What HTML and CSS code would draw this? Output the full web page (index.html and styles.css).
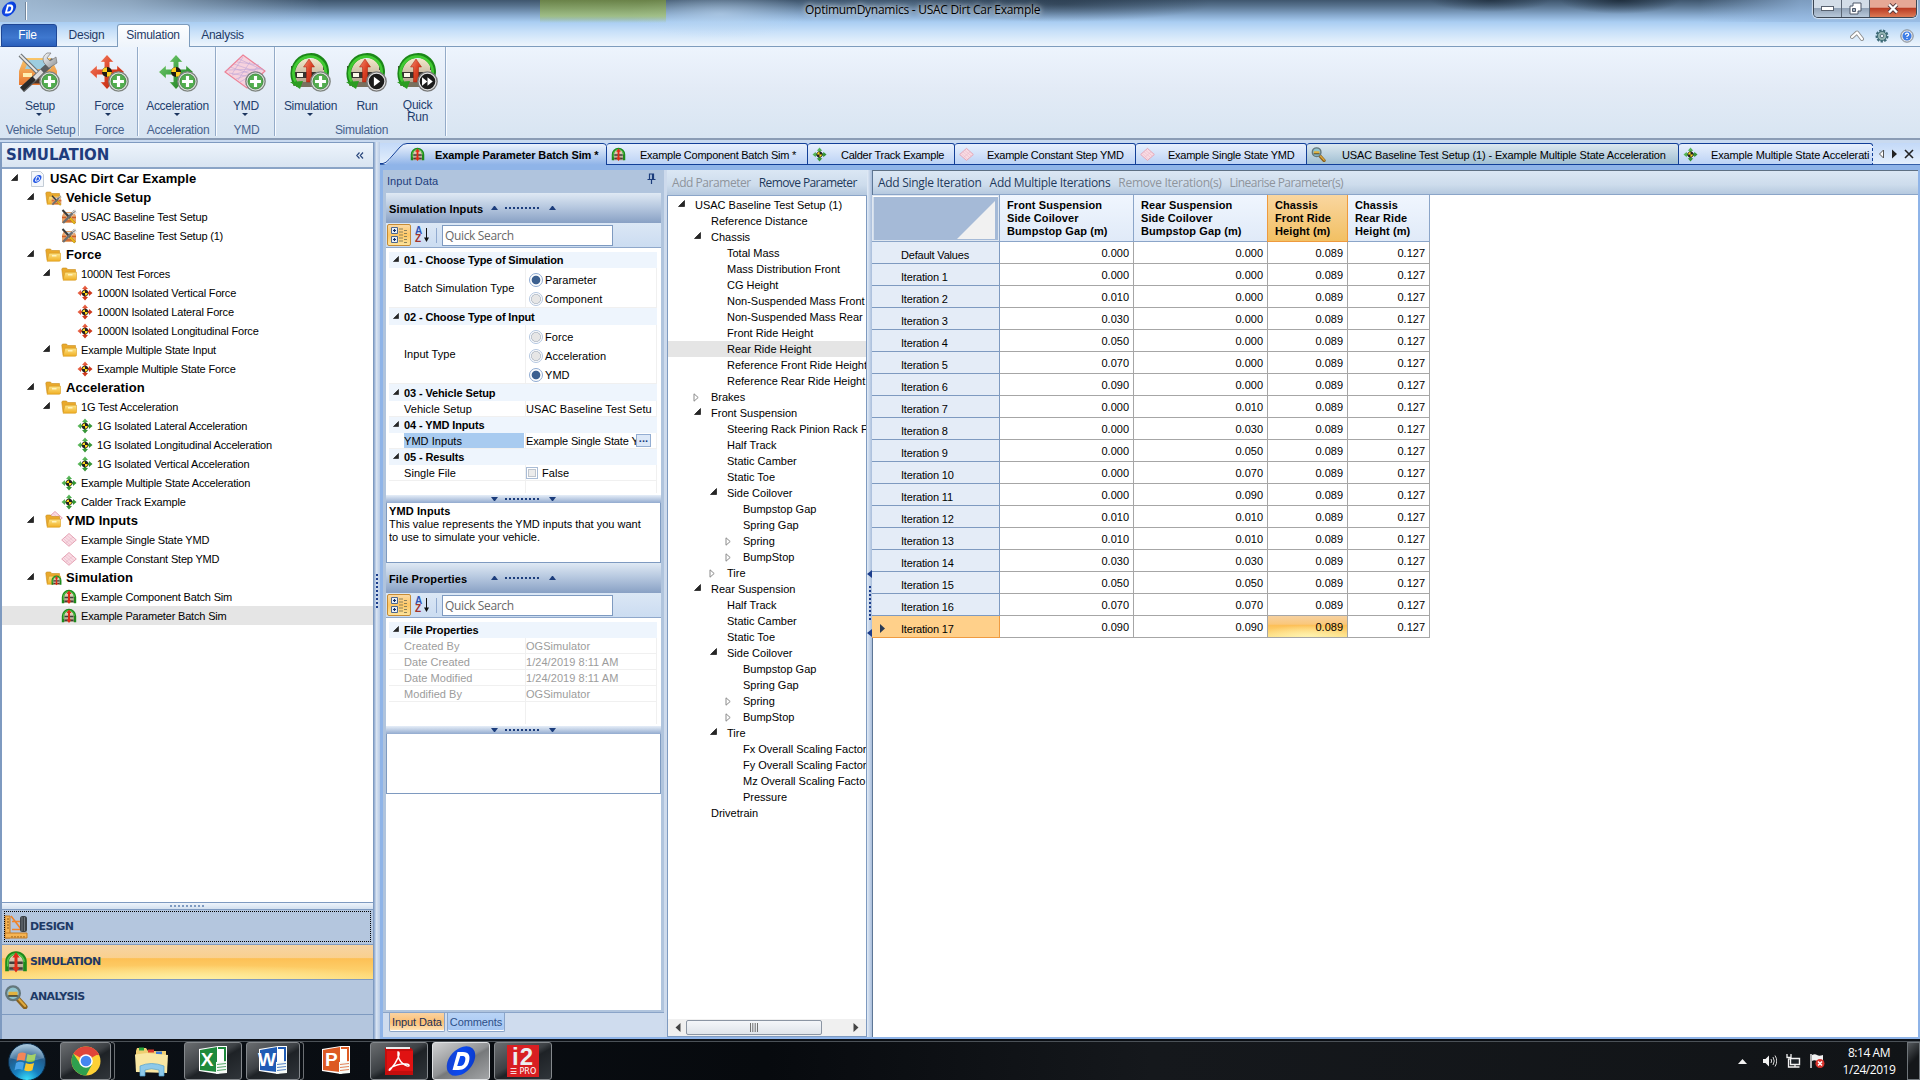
FILE: index.html
```html
<!DOCTYPE html>
<html lang="en">
<head>
<meta charset="utf-8">
<title>OptimumDynamics - USAC Dirt Car Example</title>
<link rel="stylesheet" href="styles.css">
</head>
<body>
<svg class="defs" width="0" height="0">
  <defs>
    <linearGradient id="gRed" x1="0" y1="0" x2="1" y2="1"><stop offset="0" stop-color="#f58a6e"/><stop offset=".5" stop-color="#dc4326"/><stop offset="1" stop-color="#b3260c"/></linearGradient>
    <linearGradient id="gGrn" x1="0" y1="0" x2="1" y2="1"><stop offset="0" stop-color="#7fd07a"/><stop offset=".5" stop-color="#3fa443"/><stop offset="1" stop-color="#23791f"/></linearGradient>
    <linearGradient id="gFold" x1="0" y1="0" x2="0" y2="1"><stop offset="0" stop-color="#fde58a"/><stop offset="1" stop-color="#f0ae22"/></linearGradient>
    <linearGradient id="gCar" x1="0" y1="0" x2="0" y2="1"><stop offset="0" stop-color="#f9c76b"/><stop offset="1" stop-color="#e5702c"/></linearGradient>
    <linearGradient id="gBody" x1="0" y1="0" x2="0" y2="1"><stop offset="0" stop-color="#f3e6cb"/><stop offset="1" stop-color="#a89b86"/></linearGradient>
    <linearGradient id="gSteel" x1="0" y1="0" x2="1" y2="1"><stop offset="0" stop-color="#fafafa"/><stop offset="1" stop-color="#8b8f92"/></linearGradient>
    <radialGradient id="gOrb" cx=".5" cy="1" r="1"><stop offset="0" stop-color="#3ce6ff"/><stop offset=".35" stop-color="#1780c0"/><stop offset=".7" stop-color="#225c8c"/><stop offset="1" stop-color="#9fc4dc"/></radialGradient>
    <linearGradient id="gD" x1="0" y1="0" x2="1" y2="1"><stop offset="0" stop-color="#1b3fc4"/><stop offset=".5" stop-color="#0a49f0"/><stop offset="1" stop-color="#0a35c0"/></linearGradient>
  </defs>
  <symbol id="down" viewBox="0 0 7 7"><path d="M6.500.5v6H.5z" fill="#262626" stroke="#000" stroke-width=".6"/></symbol>
  <symbol id="right" viewBox="0 0 7 9"><path d="M1 .8v7.400l4.200-3.700z" fill="#fff" stroke="#8a8a8a"/></symbol>
  <symbol id="logo" viewBox="0 0 32 32"><ellipse cx="16" cy="16" rx="17" ry="11.5" transform="rotate(-48 16 16)" fill="url(#gD)"/><path d="M12.500 7h5.500c6 0 7.500 4 6 9.500C22.500 22 19 25 13.500 25H7.500zM15.300 11l-3.100 10h2.600c3 0 4.600-2 5.300-5 .8-3.400 0-5-2.900-5z" fill="#fff" fill-rule="evenodd"/></symbol>
  <symbol id="doc" viewBox="0 0 16 16"><path d="M2.500.5h9l3 3v12h-12z" fill="#f4f7fb" stroke="#c3ccd6"/><ellipse cx="8.300" cy="8" rx="5" ry="3" transform="rotate(-42 8.300 8)" fill="#2458e6"/><path d="M7.600 5.800h1.700c2 0 1.600 4.300-1.600 4.300H6.500z" fill="none" stroke="#fff"/></symbol>
  <symbol id="folder" viewBox="0 0 16 16"><path d="M.8 3.200 1.500 2h4l1.200 1.500h7.800V13H2z" fill="#e9a92c" stroke="#c98d1d" stroke-width=".6"/><path d="M4 6.200h11.600v6.500q0 1.500-1.500 1.500H2z" fill="url(#gFold)" stroke="#d79a20" stroke-width=".6"/><path d="M7 8h4.500v1.500H7z" fill="#fff3bd"/></symbol>
  <symbol id="move" viewBox="0 0 16 16"><path d="M8 .5 11 4H9.300v2.700H12V5l3.500 3L12 11V9.300H9.300V12H11l-3 3.500L5 12h1.700V9.300H4V11L.5 8 4 5v1.700h2.700V4H5z"/><circle cx="8" cy="8" r="3.200" fill="#222"/><path d="M8 8V5.400A2.600 2.600 0 0 0 5.400 8zm0 0v2.600A2.600 2.600 0 0 0 10.600 8z" fill="#ffd91e"/></symbol>
  <symbol id="ymd" viewBox="0 0 16 16"><path d="M8 1.500 15.300 8 8 14.300.7 8z" fill="#f9dbe3" stroke="#e4a3b4"/><path d="M4 5l7 6M6 3.500l7 6M3 7l6 6M5 11l7-6" stroke="#e9bccb" stroke-width=".7"/></symbol>
  <symbol id="setup" viewBox="0 0 16 16"><path d="M1 14V7l2-4h10l2 4v7z" fill="#e8a46a"/><path d="M3.500 6.500 5 4h6l1.500 2.500z" fill="#c9d5da"/><path d="M1 8.500h4M11 8.500h4M4 12h8" stroke="#ce5b26" stroke-width="1.500"/><path d="M1.500 1 8 8l6 6.500" stroke="#3a3a3a" stroke-width="2"/><path d="M9 9l5 5.500" stroke="#e7b416" stroke-width="2.400"/><path d="M14 1.500 2 14" stroke="#6f6f6f" stroke-width="2.500"/><path d="M11 3.500 14.500 1M12 5l3.500-1.500" stroke="#d8d8d8" stroke-width="1.300"/></symbol>
  <symbol id="sim" viewBox="0 0 16 16"><path d="M2.500 14V7.500a5.500 5.500 0 0 1 11 0V14z" fill="url(#gBody)"/><path d="M2 14.200V8a6 6 0 0 1 12 0v6.200" fill="none" stroke="#1d8a1b" stroke-width="2.400"/><path d="M2.400 11V8a5.500 5.500 0 0 1 11 0" fill="none" stroke="#59c84e" stroke-width=".9"/><path d="M3.500 8.500h9M3.500 12.300h9" stroke="#40403c" stroke-width="1.600"/><path d="M8 1.500 10.500 5H9v6.500h1.500L8 15l-2.500-3.500H7V5H5.500z" fill="#e02b17"/></symbol>
  <symbol id="mag" viewBox="0 0 16 16"><path d="m9 9 5 5.500" stroke="#8a6320" stroke-width="3.400" stroke-linecap="round"/><path d="m9.500 9 4.600 5" stroke="#e0a93c" stroke-width="1.400" stroke-linecap="round"/><circle cx="6" cy="5.500" r="4.600" fill="#8fc3cd" stroke="#64777c" stroke-width="1.500"/><path d="M3 4.500h6v3H3z" fill="#e1b13e"/><path d="M2.800 7.300h6.400" stroke="#3c3c33"/></symbol>
  <symbol id="badge" viewBox="0 0 20 20"><circle cx="10" cy="10" r="9.200" fill="#e9ece9" stroke="#7d837e" stroke-width="1.300"/><circle cx="10" cy="10" r="7.200" fill="#52ad4e" stroke="#3e7c3e" stroke-width=".8"/><path d="M10 4.800v10.400M4.800 10h10.400" stroke="#fff" stroke-width="3"/></symbol>
  <symbol id="play" viewBox="0 0 20 20"><circle cx="10" cy="10" r="9.200" fill="#e2e2e2" stroke="#777" stroke-width="1.300"/><circle cx="10" cy="10" r="7.400" fill="#1b1b1b"/><path d="M7.500 5.500v9l6-4.500z" fill="#fff"/></symbol>
  <symbol id="ffwd" viewBox="0 0 20 20"><circle cx="10" cy="10" r="9.200" fill="#e2e2e2" stroke="#777" stroke-width="1.300"/><circle cx="10" cy="10" r="7.400" fill="#1b1b1b"/><path d="M4.800 6v8l5-4zM10 6v8l5-4z" fill="#fff"/></symbol>
  <symbol id="bigmove" viewBox="0 0 36 36"><path d="M18 .8 24.500 8h-3.800v7.300H28v-3.800l7.200 6.500-7.200 6.500v-3.800h-7.300V28h3.800L18 35.200 11.500 28h3.800v-7.300H8v3.800L.8 18 8 11.500v3.800h7.300V8h-3.800z" stroke="#fff" stroke-opacity=".6" stroke-width=".6"/><circle cx="18" cy="18" r="5" fill="#1e1a14"/><path d="M18 18v-4.800a4.800 4.800 0 0 0-4.800 4.800zm0 0v4.800a4.800 4.800 0 0 0 4.800-4.800z" fill="#ffce1e"/></symbol>
  <symbol id="bigsim" viewBox="0 0 40 40"><path d="M5 15Q6 8 12 7h16q6 1 7 8l1 19H4z" fill="url(#gBody)"/><path d="M2 14h4v4H2zM34 14h4v4h-4z" fill="#4b4b40"/><path d="M6 20h28v6H6z" fill="#37342f"/><path d="M8 21h6v4H8zM26 21h6v4h-6z" fill="#fbf8e8"/><path d="M7 30h26v5H7z" fill="#79715f"/><path d="M7 33Q1 22 6 13C11 3 25 0 33 8c5 5 6 13 3 20" fill="none" stroke="#1b8718" stroke-width="4.600"/><path d="M6.500 30Q2 20 7 12.500C13 3.500 25 2 32 9c4.500 4.500 5.500 11 3.500 17" fill="none" stroke="#41ca32" stroke-width="2.800"/><path d="m1 30 13-1-3 8z" fill="#2c9d22"/><path d="m20 7 5.500 8h-3v15h-5V15h-3z" fill="url(#gRed)" stroke="#a51f0c" stroke-width=".5"/></symbol>
  <symbol id="bigsetup" viewBox="0 0 40 40"><path d="M1 35V19l5-13h27l6 13v14H1z" fill="url(#gCar)"/><path d="M7 17 11 8h18l4 9z" fill="#9dcde0"/><path d="M5 23h9M26 23h9" stroke="#fff0b0" stroke-width="4"/><path d="M12 29h17" stroke="#4a352a" stroke-width="5"/><path d="M2 3 20 21" stroke="#6e7478" stroke-width="4"/><path d="m2 3 18 18" stroke="#e8e8e8" stroke-width="1.800"/><path d="m36 8-7 7L4 38" stroke="#5b5e60" stroke-width="6"/><path d="m24 19-8 8" stroke="#dcdcdc" stroke-width="4"/><path d="M16 26 4 37" stroke="#2a2a2a" stroke-width="5"/><path d="M29 1q-6 4-3 10l5 5 8-5-1-6-6 4-3-3 4-5z" fill="url(#gSteel)" stroke="#777" stroke-width=".7"/></symbol>
  <symbol id="bigymd" viewBox="0 0 42 36"><path d="M19 1 41 17 23 34 1 18z" fill="#f6d2de" stroke="#ec8297" stroke-width="1.200"/><path d="M3 16l36-1M6 13l30 10M10 10l26 9M15 5l24 11M8 21l28-7M12 25l22-8M16 28l14-8M5 19l28 5M13 8l22 3M19 3 8 20M26 8 14 26M33 13 21 31" stroke="#bfa6d6" stroke-width=".6" fill="none"/></symbol>
  <symbol id="design" viewBox="0 0 24 24"><path d="M1 1h5v22H1z" fill="#f6b453" stroke="#c37b24"/><path d="M1 18h22v5H1z" fill="#f6b453" stroke="#c37b24"/><path d="M3 4h2M3 7h2M3 10h2M3 13h2M8 21v1.500M11 21v1.500M14 21v1.500M17 21v1.500M20 21v1.500" stroke="#8e5714"/><path d="M7 1l10 13M8 6.500h9M8 14.500h9" stroke="#f0842a" stroke-width="1.700"/><rect x="16" y="1" width="7" height="16" rx="2.500" fill="#3c4147"/><path d="M18 2v14M20.500 2v14" stroke="#6f767c"/></symbol>
  <symbol id="catview" viewBox="0 0 18 18"><path d="M1.500 1.500h6v6h-6zM1.500 10.500h6v6h-6z" fill="#e9f1fb" stroke="#4b668f"/><path d="M3 4.500h3M4.500 3v3M3 13.500h3M4.500 12v3" stroke="#102a60" stroke-width="1.200"/><path d="M9 3h4M9 6h4M9 9h4M9 12h4M9 15h4M14 4.500h3M14 7.500h3M14 10.500h3M14 13.500h3M14 16.500h3" stroke="#8c8158"/></symbol>
  <symbol id="office" viewBox="0 0 30 30"><path d="M1 4 20 1h9v23l-9 5L1 26z" fill="#fff"/><path d="M2 5 19 2v25L2 25z" fill="currentColor"/><path d="M20 3h7v21h-7" fill="none" stroke="currentColor" stroke-width="2"/><path d="m18 17 11-1v12l-11 1z" fill="#f7fbf7"/><path d="M19 19.500l9-1M19 22.500l9-1M19 25.500l9-1" stroke="currentColor" opacity=".75"/></symbol>
</svg>

<div class="window">
  <header class="titlebar">
    <div class="caption">
      <svg class="applogo"><use href="#logo"/></svg><i class="qsep"></i>
      <span class="caption-text">OptimumDynamics - USAC Dirt Car Example</span>
      <div class="winbtns">
        <span class="wb"><svg width="13" height="5"><rect x=".5" y=".5" width="12" height="4" fill="#fff" stroke="#58616f"/></svg></span>
        <span class="wb"><svg width="13" height="13"><path d="M4 1h8v8H9v3H1V4h3z" fill="#fff" stroke="#4d5768"/><path d="M3.500 6.500h3v3h-3z" fill="#a8b6c6" stroke="#4d5768"/></svg></span>
        <span class="wb close"><svg width="12" height="11"><path d="m2 1.500 8 8m0-8-8 8" stroke="#54393d" stroke-width="4"/><path d="m2 1.500 8 8m0-8-8 8" stroke="#fff" stroke-width="2.400"/></svg></span>
      </div>
    </div>
    <nav class="ribbontabs">
      <span class="rt file">File</span><span class="rt t-design">Design</span><span class="rt on">Simulation</span><span class="rt t-an">Analysis</span>
      <div class="rt-icons">
        <svg width="14" height="12"><path d="m2 7 5-4.500L12 9" fill="none" stroke="#8f8f8f" stroke-width="4" stroke-linejoin="round" stroke-linecap="round"/><path d="m2 7 5-4.500L12 9" fill="none" stroke="#fff" stroke-width="2.200" stroke-linejoin="round" stroke-linecap="round"/></svg>
        <svg width="14" height="14"><circle cx="7" cy="7" r="5" fill="#8fb2b4" stroke="#3d6a76" stroke-width="3" stroke-dasharray="2.200 1.200"/><circle cx="7" cy="7" r="4.500" fill="#97b7b5" stroke="#3d6a76"/><circle cx="7" cy="7" r="1.800" fill="#eef" stroke="#55777b"/></svg>
        <svg width="14" height="14"><circle cx="7" cy="7" r="6.200" fill="#dfe3e8" stroke="#808790"/><circle cx="7" cy="7" r="4.500" fill="#3e7de6"/><path d="M5.300 5.700q.1-1.500 1.700-1.500t1.700 1.300q0 .8-1.700 1.800v.8m0 1v1" fill="none" stroke="#fff" stroke-width="1.200"/></svg>
      </div>
    </nav>
  </header>

  <section class="ribbon">
    <div class="rg g1"><div class="rbs"><div class="rb"><span class="bi"><svg><use href="#bigsetup"/></svg><svg class="bd"><use href="#badge"/></svg></span><b>Setup</b><i class="dd"></i></div></div><em>Vehicle Setup</em></div>
    <div class="rg g2"><div class="rbs"><div class="rb"><span class="bi mv red"><svg><use href="#bigmove"/></svg><svg class="bd"><use href="#badge"/></svg></span><b>Force</b><i class="dd"></i></div></div><em>Force</em></div>
    <div class="rg g3"><div class="rbs"><div class="rb"><span class="bi mv green"><svg><use href="#bigmove"/></svg><svg class="bd"><use href="#badge"/></svg></span><b>Acceleration</b><i class="dd"></i></div></div><em>Acceleration</em></div>
    <div class="rg g4"><div class="rbs"><div class="rb"><span class="bi ym"><svg><use href="#bigymd"/></svg><svg class="bd"><use href="#badge"/></svg></span><b>YMD</b><i class="dd"></i></div></div><em>YMD</em></div>
    <div class="rg g5"><div class="rbs">
      <div class="rb w64"><span class="bi"><svg><use href="#bigsim"/></svg><svg class="bd"><use href="#badge"/></svg></span><b>Simulation</b><i class="dd"></i></div>
      <div class="rb w48"><span class="bi"><svg><use href="#bigsim"/></svg><svg class="bd"><use href="#play"/></svg></span><b>Run</b></div>
      <div class="rb w54"><span class="bi"><svg><use href="#bigsim"/></svg><svg class="bd"><use href="#ffwd"/></svg></span><b>Quick<br>Run</b></div>
    </div><em>Simulation</em></div>
  </section>

  <main class="work">
    <aside class="side">
      <h1>SIMULATION<span class="chev"><svg width="8" height="7"><path d="M3.500.5.8 3.500l2.700 3M7 .5 4.300 3.500l2.700 3" fill="none" stroke="#2a477c" stroke-width="1.200"/></svg></span></h1>
      <ul class="tree">
        <li class="l0 big"><i><svg><use href="#down"/></svg></i><svg><use href="#doc"/></svg>USAC Dirt Car Example</li>
        <li class="l1 big"><i><svg><use href="#down"/></svg></i><span class="stack"><svg><use href="#folder"/></svg><svg class="mini"><use href="#setup"/></svg></span>Vehicle Setup</li>
        <li class="l2"><i></i><svg><use href="#setup"/></svg>USAC Baseline Test Setup</li>
        <li class="l2"><i></i><svg><use href="#setup"/></svg>USAC Baseline Test Setup (1)</li>
        <li class="l1 big"><i><svg><use href="#down"/></svg></i><svg><use href="#folder"/></svg>Force</li>
        <li class="l2"><i><svg><use href="#down"/></svg></i><svg><use href="#folder"/></svg>1000N Test Forces</li>
        <li class="l3 red"><i></i><svg><use href="#move"/></svg>1000N Isolated Vertical Force</li>
        <li class="l3 red"><i></i><svg><use href="#move"/></svg>1000N Isolated Lateral Force</li>
        <li class="l3 red"><i></i><svg><use href="#move"/></svg>1000N Isolated Longitudinal Force</li>
        <li class="l2"><i><svg><use href="#down"/></svg></i><svg><use href="#folder"/></svg>Example Multiple State Input</li>
        <li class="l3 red"><i></i><svg><use href="#move"/></svg>Example Multiple State Force</li>
        <li class="l1 big"><i><svg><use href="#down"/></svg></i><svg><use href="#folder"/></svg>Acceleration</li>
        <li class="l2"><i><svg><use href="#down"/></svg></i><svg><use href="#folder"/></svg>1G Test Acceleration</li>
        <li class="l3 green"><i></i><svg><use href="#move"/></svg>1G Isolated Lateral Acceleration</li>
        <li class="l3 green"><i></i><svg><use href="#move"/></svg>1G Isolated Longitudinal Acceleration</li>
        <li class="l3 green"><i></i><svg><use href="#move"/></svg>1G Isolated Vertical Acceleration</li>
        <li class="l2 green"><i></i><svg><use href="#move"/></svg>Example Multiple State Acceleration</li>
        <li class="l2 green"><i></i><svg><use href="#move"/></svg>Calder Track Example</li>
        <li class="l1 big"><i><svg><use href="#down"/></svg></i><span class="stack"><svg class="back"><use href="#ymd"/></svg><svg><use href="#folder"/></svg></span>YMD Inputs</li>
        <li class="l2"><i></i><svg><use href="#ymd"/></svg>Example Single State YMD</li>
        <li class="l2"><i></i><svg><use href="#ymd"/></svg>Example Constant Step YMD</li>
        <li class="l1 big"><i><svg><use href="#down"/></svg></i><span class="stack"><svg><use href="#folder"/></svg><svg class="mini"><use href="#sim"/></svg></span>Simulation</li>
        <li class="l2"><i></i><svg><use href="#sim"/></svg>Example Component Batch Sim</li>
        <li class="l2 sel"><i></i><svg><use href="#sim"/></svg>Example Parameter Batch Sim</li>
      </ul>
      <div class="grip"><i class="dots light"></i></div>
      <div class="nav focus"><svg><use href="#design"/></svg>DESIGN</div>
      <div class="nav active"><svg><use href="#sim"/></svg>SIMULATION</div>
      <div class="nav"><svg><use href="#mag"/></svg>ANALYSIS</div>
      <div class="navfoot"></div>
    </aside>
    <div class="vsplit"><i class="vdots"></i></div>

    <section class="docs">
      <div class="dtabs">
        <div class="dt cur"><svg class="slant" width="227" height="22" viewBox="0 0 227 22"><defs><linearGradient id="gTab" x1="0" y1="0" x2="0" y2="1"><stop offset="0" stop-color="#eef4fd"/><stop offset="1" stop-color="#8eb3e8"/></linearGradient></defs><path d="M0 22h3q3-.5 6-4L20 4q3-3.500 7-3.500h196q3.500 0 3.500 3V22z" fill="url(#gTab)"/><path d="M0 20.500h3q3-.5 6-4L20 4q3-3.500 7-3.500h196q3.500 0 3.500 3V22" fill="none" stroke="#123f98"/></svg><svg class="ti"><use href="#sim"/></svg><span>Example Parameter Batch Sim *</span></div>
        <div class="dt d2"><svg class="ti"><use href="#sim"/></svg><span>Example Component Batch Sim *</span></div>
        <div class="dt d3 green"><svg class="ti"><use href="#move"/></svg><span>Calder Track Example</span></div>
        <div class="dt d4"><svg class="ti"><use href="#ymd"/></svg><span>Example Constant Step YMD</span></div>
        <div class="dt d5"><svg class="ti"><use href="#ymd"/></svg><span>Example Single State YMD</span></div>
        <div class="dt d6 teal"><svg class="ti"><use href="#mag"/></svg><span>USAC Baseline Test Setup (1) - Example Multiple State Acceleration</span></div>
        <div class="dt d7 green"><svg class="ti"><use href="#move"/></svg><span>Example Multiple State Accelerati</span></div>
        <div class="dnav"><svg width="36" height="12"><path d="M5.500 2v8L1.500 6z" fill="#fff" stroke="#555"/><path d="M14 1.500v9L19 6z" fill="#222"/><path d="m27 2 8 8m0-8-8 8" stroke="#222" stroke-width="1.600"/></svg></div>
      </div>
      <div class="page">
        <section class="input">
          <div class="in-title"><span>Input Data</span><svg width="9" height="11"><path d="M2.500 6V1h4v5M5.500 1v5M.5 6.500h8M4.500 7v4" fill="none" stroke="#1c3d7c" stroke-width="1.200"/></svg></div>
          <div class="in-body">
            <div class="band"><b>Simulation Inputs</b><i class="grp"><s class="up"></s><i class="dots"></i><s class="up"></s></i></div>
            <div class="tools"><span class="cat"><svg><use href="#catview"/></svg></span><span class="az"><span><b>A</b><b class="z">Z</b></span><svg width="5" height="14"><path d="M2.500 0v11" stroke="#111"/><path d="M0 9.500h5L2.500 14z" fill="#111"/></svg></span><i class="tsep"></i><span class="search">Quick Search</span></div>
            <div class="props p1">
              <div class="cate"><svg><use href="#down"/></svg>01 - Choose Type of Simulation</div>
              <div class="pr h40"><label>Batch Simulation Type</label><div class="val opts"><span><i class="rad on"></i>Parameter</span><span><i class="rad"></i>Component</span></div></div>
              <div class="cate c17"><svg><use href="#down"/></svg>02 - Choose Type of Input</div>
              <div class="pr h59"><label>Input Type</label><div class="val opts"><span><i class="rad"></i>Force</span><span><i class="rad"></i>Acceleration</span><span><i class="rad on"></i>YMD</span></div></div>
              <div class="cate c17"><svg><use href="#down"/></svg>03 - Vehicle Setup</div>
              <div class="pr"><label>Vehicle Setup</label><div class="val clip">USAC Baseline Test Setu</div></div>
              <div class="cate"><svg><use href="#down"/></svg>04 - YMD Inputs</div>
              <div class="pr"><label class="hot">YMD Inputs</label><div class="val"><span class="vt">Example Single State Y</span><i class="more">...</i></div></div>
              <div class="cate"><svg><use href="#down"/></svg>05 - Results</div>
              <div class="pr"><label>Single File</label><div class="val"><i class="chk"></i>False</div></div>
              <div class="pr rest"><label></label><div class="val"></div></div>
            </div>
            <div class="hsplit"><i class="grp"><s class="dn"></s><i class="dots"></i><s class="dn"></s></i></div>
            <div class="desc"><b>YMD Inputs</b>This value represents the YMD inputs that you want<br>to use to simulate your vehicle.</div>
            <div class="band two"><b>File Properties</b><i class="grp"><s class="up"></s><i class="dots"></i><s class="up"></s></i></div>
            <div class="tools"><span class="cat"><svg><use href="#catview"/></svg></span><span class="az"><span><b>A</b><b class="z">Z</b></span><svg width="5" height="14"><path d="M2.500 0v11" stroke="#111"/><path d="M0 9.500h5L2.500 14z" fill="#111"/></svg></span><i class="tsep"></i><span class="search">Quick Search</span></div>
            <div class="props p2">
              <div class="cate"><svg><use href="#down"/></svg>File Properties</div>
              <div class="pr off"><label>Created By</label><div class="val">OGSimulator</div></div>
              <div class="pr off"><label>Date Created</label><div class="val">1/24/2019 8:11 AM</div></div>
              <div class="pr off"><label>Date Modified</label><div class="val">1/24/2019 8:11 AM</div></div>
              <div class="pr off"><label>Modified By</label><div class="val">OGSimulator</div></div>
              <div class="pr rest"><label></label><div class="val"></div></div>
            </div>
            <div class="hsplit"><i class="grp"><s class="dn"></s><i class="dots"></i><s class="dn"></s></i></div>
            <div class="desc"></div>
          </div>
          <div class="in-tabs"><span class="it on">Input Data</span><span class="it">Comments</span></div>
        </section>

        <section class="params">
          <div class="ptool"><span class="dim">Add Parameter</span><span class="rmp">Remove Parameter</span></div>
          <ul class="ptree">
            <li class="m0"><i><svg><use href="#down"/></svg></i>USAC Baseline Test Setup (1)</li>
            <li class="m1"><i></i>Reference Distance</li>
            <li class="m1"><i><svg><use href="#down"/></svg></i>Chassis</li>
            <li class="m2"><i></i>Total Mass</li>
            <li class="m2"><i></i>Mass Distribution Front</li>
            <li class="m2"><i></i>CG Height</li>
            <li class="m2"><i></i>Non-Suspended Mass Front</li>
            <li class="m2"><i></i>Non-Suspended Mass Rear</li>
            <li class="m2"><i></i>Front Ride Height</li>
            <li class="m2 sel"><i></i>Rear Ride Height</li>
            <li class="m2"><i></i>Reference Front Ride Height</li>
            <li class="m2"><i></i>Reference Rear Ride Height</li>
            <li class="m1"><i><svg class="r"><use href="#right"/></svg></i>Brakes</li>
            <li class="m1"><i><svg><use href="#down"/></svg></i>Front Suspension</li>
            <li class="m2"><i></i>Steering Rack Pinion Rack P</li>
            <li class="m2"><i></i>Half Track</li>
            <li class="m2"><i></i>Static Camber</li>
            <li class="m2"><i></i>Static Toe</li>
            <li class="m2"><i><svg><use href="#down"/></svg></i>Side Coilover</li>
            <li class="m3"><i></i>Bumpstop Gap</li>
            <li class="m3"><i></i>Spring Gap</li>
            <li class="m3"><i><svg class="r"><use href="#right"/></svg></i>Spring</li>
            <li class="m3"><i><svg class="r"><use href="#right"/></svg></i>BumpStop</li>
            <li class="m2"><i><svg class="r"><use href="#right"/></svg></i>Tire</li>
            <li class="m1"><i><svg><use href="#down"/></svg></i>Rear Suspension</li>
            <li class="m2"><i></i>Half Track</li>
            <li class="m2"><i></i>Static Camber</li>
            <li class="m2"><i></i>Static Toe</li>
            <li class="m2"><i><svg><use href="#down"/></svg></i>Side Coilover</li>
            <li class="m3"><i></i>Bumpstop Gap</li>
            <li class="m3"><i></i>Spring Gap</li>
            <li class="m3"><i><svg class="r"><use href="#right"/></svg></i>Spring</li>
            <li class="m3"><i><svg class="r"><use href="#right"/></svg></i>BumpStop</li>
            <li class="m2"><i><svg><use href="#down"/></svg></i>Tire</li>
            <li class="m3"><i></i>Fx Overall Scaling Factor</li>
            <li class="m3"><i></i>Fy Overall Scaling Factor</li>
            <li class="m3"><i></i>Mz Overall Scaling Facto</li>
            <li class="m3"><i></i>Pressure</li>
            <li class="m1"><i></i>Drivetrain</li>
          </ul>
          <div class="hscroll"><svg width="6" height="9"><path d="M5.500 0v9L.5 4.500z" fill="#444"/></svg><div class="thumb"><svg width="8" height="9"><path d="M.5 0v9M2.800 0v9M5.200 0v9M7.500 0v9" stroke="#707070"/></svg></div><svg width="6" height="9"><path d="M.5 0v9l5-4.500z" fill="#444"/></svg></div>
        </section>

        <div class="psplit"><svg width="5" height="8"><path d="M5 0v8L0 4z" fill="#1c3d8c"/></svg><i class="vdots"></i><svg width="5" height="8"><path d="M5 0v8L0 4z" fill="#1c3d8c"/></svg></div>

        <section class="sheet">
          <div class="stool"><span>Add Single Iteration</span><span>Add Multiple Iterations</span><span class="dim">Remove Iteration(s)</span><span class="dim lin">Linearise Parameter(s)</span></div>
          <table>
            <colgroup><col class="k0"><col class="k1"><col class="k1"><col class="k3"><col class="k4"></colgroup>
            <thead><tr><th class="corner"><svg width="125" height="44"><path d="M0 0h125v44H0z" fill="#a5bad7"/><path d="M122 5v38H84z" fill="#f1f1f1"/><path d="M0 44V.5h125" fill="none" stroke="#fff"/></svg></th><th>Front Suspension<br>Side Coilover<br>Bumpstop Gap (m)</th><th>Rear Suspension<br>Side Coilover<br>Bumpstop Gap (m)</th><th class="hl">Chassis<br>Front Ride<br>Height (m)</th><th>Chassis<br>Rear Ride<br>Height (m)</th></tr></thead>
            <tbody>
              <tr><th>Default Values</th><td>0.000</td><td>0.000</td><td>0.089</td><td>0.127</td></tr>
              <tr><th>Iteration 1</th><td>0.000</td><td>0.000</td><td>0.089</td><td>0.127</td></tr>
              <tr><th>Iteration 2</th><td>0.010</td><td>0.000</td><td>0.089</td><td>0.127</td></tr>
              <tr><th>Iteration 3</th><td>0.030</td><td>0.000</td><td>0.089</td><td>0.127</td></tr>
              <tr><th>Iteration 4</th><td>0.050</td><td>0.000</td><td>0.089</td><td>0.127</td></tr>
              <tr><th>Iteration 5</th><td>0.070</td><td>0.000</td><td>0.089</td><td>0.127</td></tr>
              <tr><th>Iteration 6</th><td>0.090</td><td>0.000</td><td>0.089</td><td>0.127</td></tr>
              <tr><th>Iteration 7</th><td>0.000</td><td>0.010</td><td>0.089</td><td>0.127</td></tr>
              <tr><th>Iteration 8</th><td>0.000</td><td>0.030</td><td>0.089</td><td>0.127</td></tr>
              <tr><th>Iteration 9</th><td>0.000</td><td>0.050</td><td>0.089</td><td>0.127</td></tr>
              <tr><th>Iteration 10</th><td>0.000</td><td>0.070</td><td>0.089</td><td>0.127</td></tr>
              <tr><th>Iteration 11</th><td>0.000</td><td>0.090</td><td>0.089</td><td>0.127</td></tr>
              <tr><th>Iteration 12</th><td>0.010</td><td>0.010</td><td>0.089</td><td>0.127</td></tr>
              <tr><th>Iteration 13</th><td>0.010</td><td>0.010</td><td>0.089</td><td>0.127</td></tr>
              <tr><th>Iteration 14</th><td>0.030</td><td>0.030</td><td>0.089</td><td>0.127</td></tr>
              <tr><th>Iteration 15</th><td>0.050</td><td>0.050</td><td>0.089</td><td>0.127</td></tr>
              <tr><th>Iteration 16</th><td>0.070</td><td>0.070</td><td>0.089</td><td>0.127</td></tr>
              <tr class="last"><th><svg width="5" height="9"><path d="M0 0v9l5-4.500z" fill="#2a3b55"/></svg>Iteration 17</th><td>0.090</td><td>0.090</td><td class="glow">0.089</td><td>0.127</td></tr>
            </tbody>
          </table>
        </section>
      </div>
    </section>
  </main>

  <footer class="taskbar">
    <span class="orb"><svg width="40" height="40" viewBox="0 0 40 40"><circle cx="20" cy="20" r="18.500" fill="url(#gOrb)" stroke="#0a2a46"/><path d="M11 12q4-2.500 8-.5l-1.500 7.500q-4-2-8 .3z" fill="#f0652a"/><path d="M20.500 12q4 2 8.500-.2L27.500 19q-4 2-8.300.2z" fill="#8cc63e"/><path d="M9 21q4-2.300 8-.3L15.500 28q-4-2-8 .3z" fill="#4aa3e8"/><path d="M18.800 21q4 2 8.300 0l-1.700 7.300q-4 2-8.200 0z" fill="#fcc92d"/><path d="M3 16Q6 3 20 2.500 34 3 37 16q-17 6-34 0z" fill="#fff" opacity=".22"/></svg></span>
    <span class="tb b-chrome"><svg width="30" height="30" viewBox="0 0 30 30"><circle cx="15" cy="15" r="14.500" fill="#fdd035"/><path d="M15 15 2.400 7.800A14.500 14.500 0 0 1 27.600 7.800z" fill="#e0453a"/><path d="M2.400 7.800A14.500 14.500 0 0 0 15 29.500l6-11-12-1z" fill="#2fa04e"/><path d="M15 8.300h12.800" stroke="#e0453a" stroke-width="1.500"/><circle cx="15" cy="15" r="6.800" fill="#fff"/><circle cx="15" cy="15" r="5.300" fill="#4586f0"/></svg></span><i class="edge"></i>
    <span class="ic b-exp"><svg width="33" height="31" viewBox="0 0 33 31"><path d="M1 5 2 2h9l2 3h18v20H1z" fill="#f0cf72"/><path d="M4 1.500h5v3H4z" fill="#28a43b"/><path d="M13 3.500h6v3h-6z" fill="#d8372b"/><path d="M21 5.500h6v3h-6z" fill="#3a78d6"/><path d="M0 8.500 12 7l21 2-1 18-31-1z" fill="#f9e7a3"/><path d="M5 20q11-5 24 0v10h-5v-6q-8-2.500-14 0v6H5z" fill="#8dc9ea" stroke="#4f9fcf" stroke-width=".7"/></svg></span>
    <span class="tb b-xl office xl"><svg width="30" height="30"><use href="#office"/></svg><b>X</b></span>
    <span class="tb b-wd office wd"><svg width="30" height="30"><use href="#office"/></svg><b>W</b></span><i class="edge"></i>
    <span class="ic b-pp office pp"><svg width="30" height="30"><use href="#office"/></svg><b>P</b></span>
    <span class="tb b-pdf"><svg width="30" height="29" viewBox="0 0 30 29"><path d="M1 1h26l2 2v25H1z" fill="#c50d0d"/><path d="M2 0h24v2H2z" fill="#eee"/><path d="M3 4h26v20H3z" fill="#e01212"/><path d="M14 5c3 0 0 9-8 18-2 1.500-.5-3 7-5s13-1 12 .8c-1 1.500-12-3-11-13.800z" fill="none" stroke="#fff" stroke-width="1.400"/></svg></span>
    <span class="tb b-od"><svg width="32" height="32"><use href="#logo"/></svg></span>
    <span class="tb b-i2"><span class="i2"><b>i2</b><small>☰ PRO</small></span></span>
    <div class="tray">
      <svg width="9" height="5"><path d="M0 5 4.500 0 9 5z" fill="#f2f2f2"/></svg>
      <svg width="15" height="14"><path d="M1 5h2.500L7 1.500v11L3.500 9H1z" fill="#f2f2f2"/><path d="M9 5q1.200 2 0 4M11 3q2.500 4 0 8M13 1.500q3.500 5.500 0 11" fill="none" stroke="#d8d8d8"/></svg>
      <svg width="15" height="14"><path d="M4.500 4.500h9v6h-9z" fill="#1b2127" stroke="#f2f2f2" stroke-width="1.400"/><path d="M9 11v2M5.500 13h8M2.500 5v8h4M1 0v3.500h4V0M3 3v3" fill="none" stroke="#f2f2f2" stroke-width="1.300"/></svg>
      <svg width="15" height="16"><path d="M1 1v14" stroke="#f2f2f2" stroke-width="1.400"/><path d="M2 2q3-1.500 5 0t6 0v6q-3 1.500-6 0t-5 0z" fill="#f2f2f2"/><circle cx="10" cy="10.500" r="4.500" fill="#d8332d"/><path d="m8 8.500 4 4m0-4-4 4" stroke="#fff" stroke-width="1.500"/></svg>
    </div>
    <div class="clock"><span>8:14 AM</span><span>1/24/2019</span></div>
    <div class="peek"></div>
  </footer>
</div>
</body>
</html>
```
FILE: styles.css
```css
* { box-sizing: border-box; }
html, body { margin: 0; height: 100%; overflow: hidden; }
body { font: 11px/16px "Liberation Sans", Arial, sans-serif; color: #000; background: #fff; }
ul { list-style: none; margin: 0; padding: 0; }
i, em, s { font-style: normal; text-decoration: none; }
svg { display: block; flex: none; }
.defs { position: absolute; }
.window { width: 1920px; height: 1080px; display: flex; flex-direction: column; overflow: hidden; white-space: nowrap; }
.red { fill: url(#gRed); }
.green { fill: url(#gGrn); }

/* title bar */
.titlebar { height: 47px; flex: none; border-bottom: 1px solid #7d9cbd;
  background:
    linear-gradient(rgba(120,145,60,.75), rgba(165,195,110,.75) 70%, transparent) 540px 0/126px 23px no-repeat,
    radial-gradient(ellipse 90px 24px at 720px 14px, rgba(190,215,240,.6), transparent),
    radial-gradient(ellipse 150px 18px at 1060px 4px, rgba(10,20,30,.4), transparent),
    radial-gradient(ellipse 60px 12px at 1490px 0, rgba(10,20,30,.5), transparent),
    radial-gradient(ellipse 60px 14px at 1620px 0, rgba(10,20,30,.6), transparent),
    linear-gradient(90deg, rgba(165,190,215,.95), rgba(165,190,215,.75) 130px, transparent 320px, transparent 1700px, rgba(150,185,225,.7) 1800px, rgba(150,185,225,.8)) 0 0/100% 22px no-repeat,
    linear-gradient(#3f566e 0, #58738f 6px, #86a8cc 15px, #a9cdf2 22px, #c9e1f9 32px, #eef5fc 46px); }
.caption { height: 23px; display: flex; align-items: flex-start; }
.applogo { width: 16px; height: 16px; margin: 1px 0 0 1px; }
.qsep { width: 2px; height: 18px; margin: 2px 0 0 8px; background: #fff; border-left: 1px solid #74879c; }
.caption-text { margin: 0 0 0 778px; font: 12px/19px "Open Sans", sans-serif; letter-spacing: -.27px; width: 400px; text-shadow: 0 0 5px #fff, 0 0 8px #ffffff80; }
.winbtns { display: flex; height: 18px; margin-left: auto; margin-right: 3px; border: 1px solid #3c4653; border-top: 0; border-radius: 0 0 5px 5px; overflow: hidden; box-shadow: 0 0 1px 1px #ffffffa0; }
.wb { width: 28px; display: flex; align-items: center; justify-content: center; background: linear-gradient(#d3dde8 0 45%, #92a3b7 50%, #b9c9da); border-right: 1px solid #5b6675; }
.wb.close { width: 46px; border: 0; background: linear-gradient(#e6a796 0 42%, #bb3c24 50%, #dd7a55); }
.ribbontabs { height: 24px; display: flex; font-size: 12px; letter-spacing: -.25px; padding: 1px 0 0 1px; color: #1f3a66; line-height: 22px; text-align: center; }
.rt { height: 23px; }
.rt.file { width: 56px; padding-right: 3px; background: linear-gradient(#2d62b8, #3f78cf 60%, #2a5fbb); color: #fff; border: 1px solid #1f4795; border-radius: 3px 3px 0 0; line-height: 21px; }
.t-design { width: 60px; padding-right: 1px; }
.rt.on { width: 73px; background: linear-gradient(#fdfeff, #eef4fb); border: 1px solid #7d9cbd; border-bottom: 0; border-radius: 3px 3px 0 0; line-height: 21px; padding-right: 1px; }
.t-an { width: 65px; }
.rt-icons { margin-left: auto; margin-right: 6px; display: flex; gap: 11px; align-items: center; }

/* ribbon */
.ribbon { height: 93px; flex: none; display: flex; padding: 0 0 2px; background: linear-gradient(#edf4fd, #e3ebf6 45%, #d8e5f2); border-bottom: 2px solid #8a9cb5; color: #24406e; font-size: 12px; letter-spacing: -.28px; }
.rg { display: flex; flex-direction: column; align-items: center; border-right: 1px solid #94abc8; box-shadow: 1px 0 #f8fbff; }
.g1 { width: 79px; } .g2 { width: 59px; } .g3 { width: 78px; } .g4 { width: 59px; } .g5 { width: 171px; }
.rbs { display: flex; height: 76px; flex: none; }
.rg em { color: #47628e; line-height: 15px; flex: none; padding-left: 3px; }
.rb { display: flex; flex-direction: column; align-items: center; padding-top: 5px; }
.w64 { width: 68px; } .w48 { width: 45px; } .w54 { width: 56px; }
.bi { position: relative; width: 42px; height: 42px; }
.bi svg { width: 40px; height: 40px; }
.mv svg:first-child { width: 36px; height: 36px; margin: 2px 0 0 2px; }
.ym svg:first-child { width: 42px; height: 36px; margin-top: 2px; }
.bi .bd { position: absolute; width: 21px; height: 21px; left: 21px; top: 19px; }
.rb b { font-weight: 400; line-height: 12px; margin-top: 6px; text-align: center; padding-left: 2px; }
.dd { border: 3px solid transparent; border-top-color: #1c355f; border-bottom: 0; margin-top: 1px; }

.work { height: 901px; flex: none; display: flex; background: #c9daf0; padding-top: 2px; }

/* left navigation */
.side { width: 374px; display: flex; flex-direction: column; border: 1px solid #7e9ac0; border-left-width: 2px; background: #fff; height: 898px; }
.side h1 { margin: 0; height: 26px; flex: none; display: flex; align-items: center; background: linear-gradient(#edf4fc, #d8e4f1); border-bottom: 2px solid #8aa4c6; font: bold 15px/24px "DejaVu Sans", Verdana, sans-serif; letter-spacing: -.15px; color: #1e3c7d; padding-left: 4px; }
.chev { margin-left: auto; margin-right: 9px; }
.tree { height: 733px; flex: none; letter-spacing: -.18px; }
.tree li { height: 19px; display: flex; align-items: center; }
.tree li > i { width: 18px; display: flex; }
.tree li > i svg { width: 7px; height: 7px; margin: 0 0 2px 0; }
.tree li > svg, .stack svg { width: 16px; height: 16px; }
.tree li > svg, .stack { margin-right: 4px; }
.tree .big > svg, .tree .big > .stack { margin-right: 5px; }
.stack { position: relative; width: 16px; height: 16px; }
.stack .mini { position: absolute; width: 11px; height: 11px; right: -1px; bottom: 0; }
.stack .back { position: absolute; left: 2px; top: -3px; }
.stack .back + svg { position: relative; }
.l0 { padding-left: 9px; } .l1 { padding-left: 25px; } .l2 { padding-left: 41px; } .l3 { padding-left: 57px; }
.tree .big { font-weight: bold; font-size: 13px; letter-spacing: .05px; }
.sel { background: #e5e5e5; }
.grip { height: 7px; flex: none; background: linear-gradient(#eef4fb, #d3e0ef); border-top: 1px solid #7e9ac0; display: flex; justify-content: center; align-items: center; }
.dots { width: 35px; height: 2px; background: repeating-linear-gradient(90deg, #1c3d7c 0 2px, transparent 2px 4px); }
.dots.light { background: repeating-linear-gradient(90deg, #7e9ac0 0 2px, transparent 2px 4px); }
.nav { height: 35px; flex: none; border-top: 1px solid #7e9ac0; background: #b4c6de; display: flex; align-items: center; gap: 2px; padding-left: 2px; font: bold 11px/16px "DejaVu Sans", Tahoma, sans-serif; letter-spacing: -.6px; color: #1e3a66; }
.nav svg { width: 24px; height: 24px; }
.nav.focus { outline: 1px dotted #000; outline-offset: -3px; }
.nav.active { background: radial-gradient(ellipse 60% 14px at 50% 100%, #fdf0a4, transparent), linear-gradient(#f6d4a4, #fad08e 38%, #fdc055 40%, #fddb7b); }
.navfoot { flex: 1; border-top: 1px solid #7e9ac0; background: #b4c6de; }
.vsplit { width: 6px; display: flex; align-items: center; justify-content: center; background: linear-gradient(90deg, #8ba6cd, #d9e4f2 40%, #b7cae5); }
.vdots { width: 2px; height: 35px; background: repeating-linear-gradient(#1c3d8c 0 2px, transparent 2px 4px); }

/* documents */
.docs { flex: 1; min-width: 0; display: flex; flex-direction: column; background: #8fb4e8; margin-top: 1px; }
.dtabs { height: 22px; flex: none; display: flex; background: linear-gradient(#c3d9f8, #e4effc); border-bottom: 1px solid #3660a8; }
.dt { height: 22px; display: flex; align-items: center; border: 1px solid #123f98; border-left: 0; border-radius: 3px 3px 0 0; background: linear-gradient(#e8f0fd, #bcd2f5); overflow: hidden; padding-left: 4px; letter-spacing: -.25px; }
.ti { width: 15px; height: 15px; }
.dt span { padding-top: 2px; }
.cur { width: 227px; position: relative; border: 0; padding-left: 30px; font-weight: bold; letter-spacing: -.1px; background: none; }
.slant { position: absolute; left: 0; top: 0; }
.cur .ti, .cur span { position: relative; }
.cur span { margin-left: 10px; }
.d2 { width: 201px; } .d2 span { margin-left: 14px; }
.d3 { width: 147px; } .d3 span { margin-left: 14px; }
.d4 { width: 181px; } .d4 span { margin-left: 13px; }
.d5 { width: 171px; } .d5 span { margin-left: 13px; }
.d6 { width: 372px; letter-spacing: -.13px; } .d6 span { margin-left: 16px; }
.d7 { width: 194px; border-right-style: dashed; letter-spacing: -.15px; } .d7 span { margin-left: 13px; }
.teal { background: linear-gradient(#dce8ef, #a0bfd3); }
.dnav { flex: 1; display: flex; align-items: center; padding-left: 5px; }
.page { margin: 5px 2px 4px 3px; flex: 1; min-height: 0; display: flex; background: #cddaec; }

/* input data panel */
.input { width: 281px; display: flex; flex-direction: column; background: #b0c4dd; }
.in-title { height: 23px; flex: none; display: flex; justify-content: space-between; padding: 3px 8px 0 4px; color: #1c3d7c; font-size: 11px; letter-spacing: .05px; }
.in-body { height: 817px; flex: none; margin: 0 3px; background: #fff; border-bottom: 1px solid #fff; }
.band { height: 30px; display: flex; align-items: center; position: relative; padding: 2px 0 0 3px; background: linear-gradient(#dfe9f4, #b4c6de 50%, #88a0c4); }
.band b { letter-spacing: .12px; }
.grp { display: flex; align-items: center; gap: 7px; position: absolute; left: 105px; }
.band .grp { top: 13px; }
.grp .dots { margin-right: 2px; }
.up, .dn { width: 7px; height: 0; border: 3.500px solid transparent; }
.up { border-bottom: 4px solid #1c3d7c; border-top: 0; }
.dn { border-top: 4px solid #1c3d7c; border-bottom: 0; }
.tools { height: 25px; display: flex; align-items: center; padding-left: 1px; background: linear-gradient(#dbe7f5, #cbdcf1); border-bottom: 1px solid #8fa8cb; }
.cat { width: 24px; height: 22px; border: 1px solid #c68b34; background: linear-gradient(#fbd9a3, #fdc765 50%, #fde39b); display: flex; align-items: center; justify-content: center; border-radius: 2px; }
.cat svg { width: 18px; height: 18px; }
.az { display: flex; gap: 2px; width: 21px; margin-left: 4px; align-items: center; }
.az span { display: flex; flex-direction: column; font: bold 10px/8px "Liberation Sans", sans-serif; color: #2e55b4; }
.az .z { color: #a3322c; }
.tsep { width: 1px; height: 15px; background: #92abd0; margin-right: 5px; }
.search { width: 171px; height: 21px; border: 1px solid #7e9ac0; background: #fff; color: #686868; font: 12px/19px "Open Sans", sans-serif; letter-spacing: -.35px; padding-left: 2px; }
.props { margin: 4px 4px 0 3px; overflow: hidden; }
.p1 { height: 241px; } .p2 { height: 102px; }
.cate { height: 16px; background: #eef5fd; font-weight: bold; line-height: 16px; display: flex; align-items: center; gap: 5px; padding-left: 4px; letter-spacing: -.12px; }
.cate svg { width: 6px; height: 6px; margin-bottom: 2px; }
.c17 { height: 17px; }
.pr { height: 16px; display: flex; padding-left: 15px; border-bottom: 1px solid #f0f0f0; line-height: 16px; letter-spacing: .05px; }
.pr label { width: 122px; display: flex; align-items: center; border-right: 1px solid #f0f0f0; }
.pr label.hot { background: linear-gradient(90deg, #a8cbf0 120px, #fff 120px); }
.val { flex: 1; display: flex; align-items: center; overflow: hidden; border-right: 1px solid #f0f0f0; }
.vt { width: 110px; letter-spacing: -.12px; }
.h40 { height: 40px; } .h59 { height: 59px; } .rest { flex: 1; height: 40px; border: 0; }
.opts { flex-direction: column; align-items: flex-start; justify-content: center; padding-top: 3px; }
.opts span { display: flex; align-items: center; gap: 2px; height: 19px; padding-left: 3px; flex: none; }
.rad { width: 14px; height: 14px; border-radius: 50%; border: 1px solid #b3c6e0; background: radial-gradient(circle, #e6e6e6 0 4px, #bfc6cf 4px 4.800px, #fff 5.300px); }
.rad.on { background: radial-gradient(circle, #3c6090 0 3.800px, #fff 4.800px); border-color: #8fabd2; }
.chk { width: 12px; height: 12px; margin: 0 4px 0 0; border: 1px solid #a9bcd6; background: #ececec; box-shadow: inset 0 0 0 1px #fff, inset 0 0 0 2px #c0c6ce; }
.more { width: 15px; height: 13px; border: 1px solid #93add2; background: #dce8f8; line-height: 6px; text-align: center; font-weight: bold; color: #1c3d7c; flex: none; }
.off { color: #9c9c9c; }
.hsplit { height: 8px; position: relative; display: flex; align-items: center; background: linear-gradient(#e6eef8, #93abcf); margin-top: 2px; }
.hsplit + .desc { margin-top: -1px; }
.desc { height: 61px; border: 1px solid #7e9ac0; padding: 2px; line-height: 13px; }
.desc b { display: block; letter-spacing: .1px; }
.in-tabs { flex: 1; border-top: 1px solid #8aa4c8; margin-top: 2px; background: #cfdcee; display: flex; gap: 2px; padding-left: 6px; color: #2d4f89; }
.it { height: 19px; width: 58px; text-align: center; border: 1px solid #8aa4c8; border-top: 0; line-height: 18px; background: linear-gradient(#b9d4f6, #a4c5f2); border-radius: 0 0 2px 2px; box-shadow: inset 0 -1px #fff; letter-spacing: -.1px; }
.it.on { width: 56px; background: linear-gradient(#fad3a2, #fcbf73 50%, #fee6bd); color: #1c2f55; }

/* parameter tree */
.params { width: 200px; margin-left: 3px; display: flex; flex-direction: column; border: 1px solid #7e9ac0; background: #fff; }
.ptool, .stool { height: 26px; flex: none; display: flex; font: 12px/25px "Open Sans", sans-serif; background: linear-gradient(#dbe7f4, #cddcec 60%, #b6c9df); color: #1e395b; border-bottom: 1px solid #8ba5c8; margin: -1px -1px 0; }
.ptool { padding-left: 5px; gap: 8px; letter-spacing: -.45px; }
.rmp { letter-spacing: -.6px; }
.dim { color: #8e949c; }
.ptree { flex: 1; padding-top: 1px; overflow: hidden; }
.ptree li { height: 16px; display: flex; align-items: center; }
.ptree li i { width: 17px; display: flex; flex: none; }
.ptree li i svg { width: 7px; height: 7px; margin-bottom: 3px; }
.ptree li i svg.r { width: 7px; height: 9px; margin: 0 0 0 -1px; }
.m0 { padding-left: 10px; } .m1 { padding-left: 26px; } .m2 { padding-left: 42px; } .m3 { padding-left: 58px; }
.hscroll { height: 17px; flex: none; background: #f0f0f0; display: flex; align-items: center; padding: 0 7px; }
.thumb { width: 136px; height: 15px; margin: 0 auto 0 5px; border: 1px solid #8b95a3; border-radius: 2px; background: linear-gradient(#f4f6f9, #dfe4ea); display: flex; align-items: center; justify-content: center; }
.psplit { width: 5px; display: flex; flex-direction: column; align-items: center; padding-top: 400px; gap: 8px; background: linear-gradient(90deg, #e3ecf7, #a9bedb); }

/* iteration sheet */
.sheet { flex: 1; background: #fff; border-left: 1px solid #5e7796; border-top: 1px solid #5e7083; }
.stool { margin: 0; height: 24px; padding-left: 5px; gap: 8px; letter-spacing: -.3px; line-height: 23px; }
.lin { letter-spacing: -.55px; }
table { border-collapse: separate; border-spacing: 0; table-layout: fixed; width: 557px; margin-left: -1px; }
.k0 { width: 128px; } .k1 { width: 134px; } .k3 { width: 80px; } .k4 { width: 82px; }
thead th { height: 47px; padding: 1px 0 0 7px; text-align: left; line-height: 13px; letter-spacing: .1px; border-right: 1px solid #8ba5c8; border-bottom: 1px solid #8ba5c8; background: linear-gradient(#f0f6fe, #e0eaf8); }
thead .corner { padding: 1px; background: #dfe7f1; }
thead .hl { background: linear-gradient(#f9d6a0, #f2c063); border-color: #ee9a3e; box-shadow: -1px 0 #ee9a3e; }
tbody th { height: 22px; padding: 4px 0 0 29px; line-height: 14px; font-weight: 400; text-align: left; letter-spacing: -.2px; background: #e4ecf7; border-right: 1px solid #7e9ac0; border-bottom: 1px solid #7e9ac0; }
tbody td { height: 22px; padding: 2px 4px 0 0; line-height: 19px; text-align: right; vertical-align: top; border-right: 1px solid #a6a6a6; border-bottom: 1px solid #a6a6a6; }
.last th { background: #ffd08a; border-color: #ef9b41; padding-left: 8px; }
.last th svg { display: inline-block; margin-right: 16px; }
.glow { background: radial-gradient(ellipse 50px 12px at 50% 100%, #fff3b0, transparent), linear-gradient(#f6d1a0, #fac77a 40%, #fdbe55 42%, #fde186); }

/* taskbar */
.taskbar { height: 39px; flex: none; display: flex; background: linear-gradient(90deg, #0b1016, #070a0e 40%, #15181c 60%, #111417); border-top: 1px solid #4b5157; box-shadow: 0 -2px #0d1116; align-items: stretch; }
.orb { width: 60px; padding: 0 0 0 7px; }
.tb { height: 38px; border: 1px solid #85898d; border-radius: 3px; display: flex; align-items: center; justify-content: center; background: linear-gradient(150deg, #6a6d70, #3d4145 45%, #1e2226 55%, #30353a); position: relative; flex: none; }
.ic { display: flex; align-items: center; position: relative; flex: none; }
.edge { width: 4px; border: solid #6b6f73; border-width: 1px 1px 1px 0; border-radius: 0 3px 3px 0; margin-right: 1px; }
.b-chrome { width: 51px; }
.b-exp { width: 49px; margin-left: 19px; }
.b-xl { width: 58px; margin-right: 4px; } .b-wd { width: 54px; }
.b-pp { width: 49px; margin-left: 16px; }
.b-pdf { width: 58px; margin-right: 4px; } .b-od { width: 58px; margin-right: 4px; } .b-i2 { width: 58px; }
.b-od { background: linear-gradient(150deg, #d0d1d2, #8f9193 50%, #77797b 55%, #a3a5a7); border-color: #e0e2e4; }
.office { padding-bottom: 3px; }
.office b { position: absolute; color: #fff; font-size: 19px; line-height: 20px; }
.tb.office b { left: 50%; width: 20px; text-align: center; margin-left: -16px; }
.pp b { left: 4px; }
.xl svg { color: #1e8a3c; } .wd svg { color: #1f5bb5; } .pp svg { color: #dd5a22; }
.i2 { width: 32px; height: 32px; background: #d81f22; color: #eceff1; display: flex; flex-direction: column; align-items: center; }
.i2 b { font: bold 24px/23px "Liberation Sans", sans-serif; letter-spacing: 1px; }
.i2 small { font: 8px/8px "DejaVu Sans", sans-serif; color: #fff; }
.tray { margin-left: auto; display: flex; align-items: center; gap: 9px; margin-right: 18px; }
.tray svg:first-child { margin-right: 6px; }
.clock { display: flex; flex-direction: column; align-items: center; width: 52px; color: #fff; font: 12px/17px "Open Sans", sans-serif; letter-spacing: -.45px; padding-top: 2px; margin-right: 12px; }
.peek { width: 13px; border: 1px solid #70767b; background: linear-gradient(135deg, #55595d, #14171a 50%); }
```
